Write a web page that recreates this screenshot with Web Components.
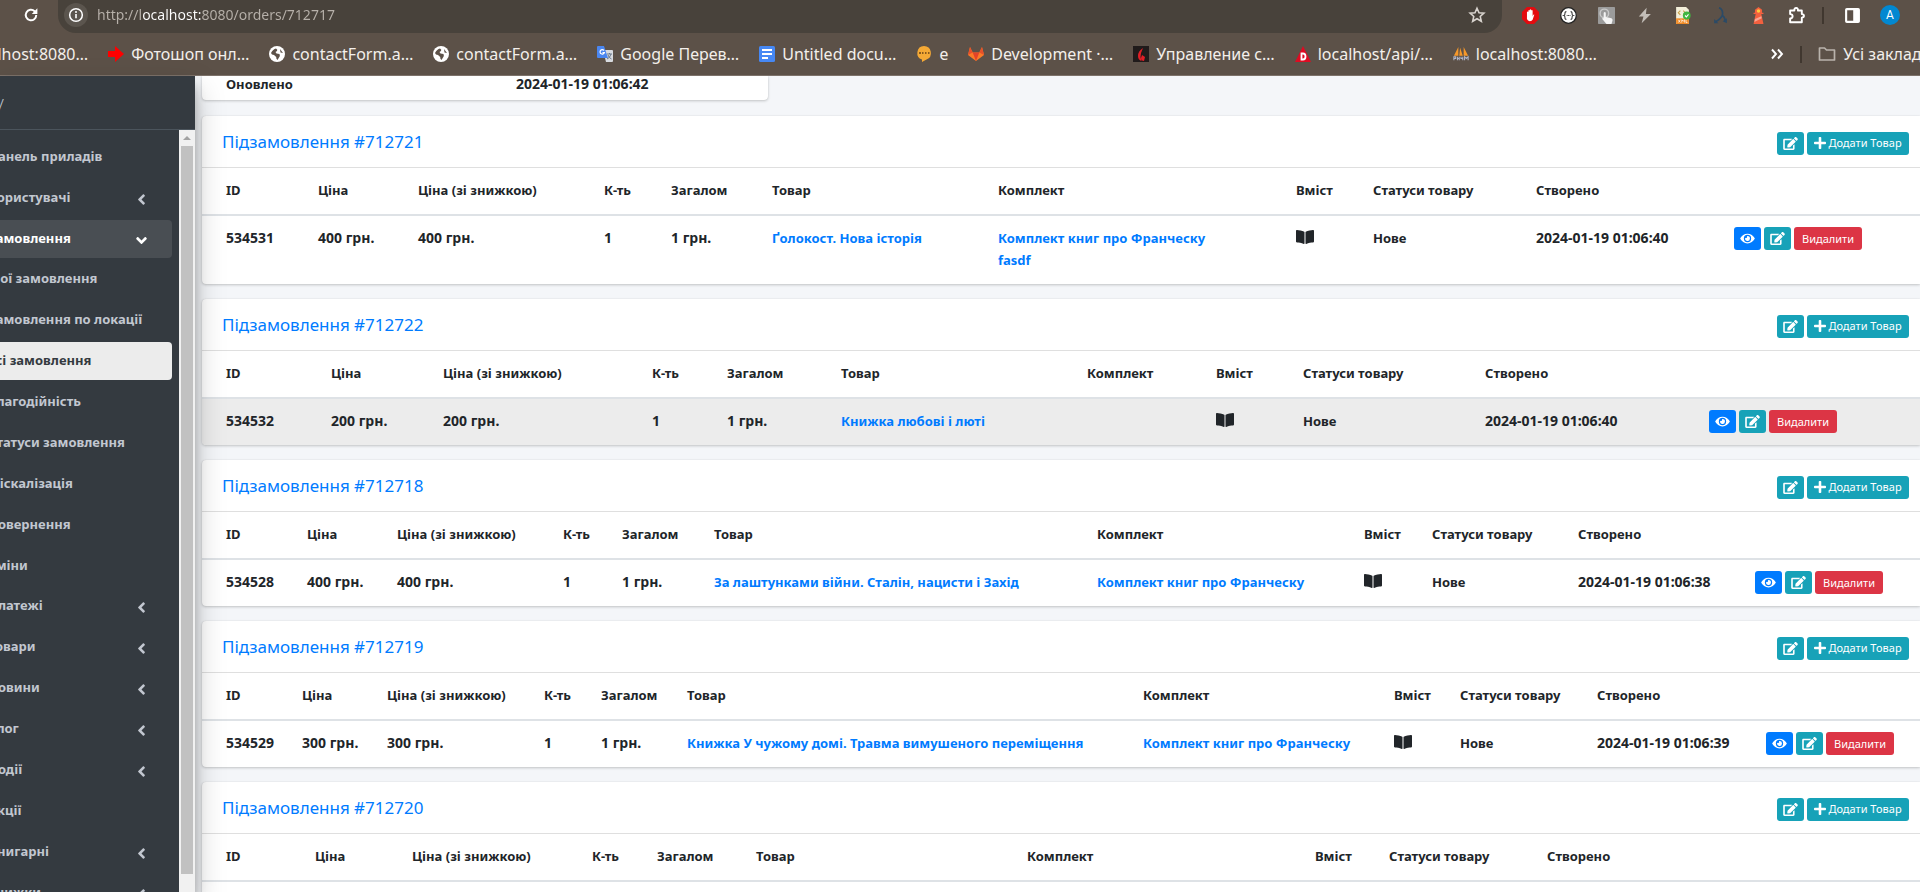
<!DOCTYPE html>
<html lang="uk">
<head>
<meta charset="utf-8">
<title>Замовлення #712717</title>
<style>
  body { margin: 0; height: 100vh; overflow: hidden; display: flex; flex-direction: column;
    font: 13px/22px "Noto Sans", "Open Sans", sans-serif; color: #212529; background: #f4f6f9; }
  .page { flex: 1; min-height: 0; display: flex; }
</style>
</head>
<body>
<browser-chrome></browser-chrome>
<div class="page">
  <side-bar></side-bar>
  <order-page></order-page>
</div>

<script>
const ICONS = {
  reload: ['0 0 24 24', '<path d="M19 12a7 7 0 1 1-2.2-5.1L19 9" fill="none" stroke="#fff" stroke-width="2.6"/><path d="M20.500 3v7.500H13z" fill="#fff"/>'],
  info: ['0 0 24 24', '<circle cx="12" cy="12" r="9.500" fill="none" stroke="#fff" stroke-width="2.300"/><path d="M12 10.500v6.500" stroke="#fff" stroke-width="2.400"/><circle cx="12" cy="7.500" r="1.500" fill="#fff"/>'],
  star: ['0 0 24 24', '<path d="M12 3l2.700 6 6.500.6-4.900 4.300 1.500 6.500L12 17l-5.800 3.400 1.500-6.500L2.800 9.600l6.500-.6z" fill="none" stroke="#d9d4cf" stroke-width="2.100"/>'],
  abp: ['0 0 24 24', '<path d="M7 0h10l7 7v10l-7 7H7l-7-7V7z" fill="#e30b0f"/><path d="M7 11V7q1-1.500 2 0V5q1-1.500 2 0V4q1-1.500 2 0v1q1-1.500 2 0v8l1-2q2-1 1 1l-2 6q-1 2-4 2t-4-3z" fill="#fff"/>'],
  json: ['0 0 24 24', '<circle cx="12" cy="12" r="11" fill="#fff" stroke="#222" stroke-width="1.800"/><path d="M9 6.500Q6.800 6.500 7 9q.3 2.500-1.500 3 1.800.5 1.500 3-.2 2.500 2 2.500M15 6.500q2.200 0 2 2.500-.3 2.500 1.500 3-1.800.5-1.500 3 .2 2.500-2 2.500" fill="none" stroke="#333" stroke-width="1.500"/><path d="M9.500 12h1.200M11.500 12h1.200M13.500 12h1.200" stroke="#333" stroke-width="1.500"/>'],
  tap: ['0 0 24 24', '<rect width="24" height="24" rx="1" fill="#9b9b9b"/><circle cx="9" cy="9" r="6" fill="none" stroke="#c9c9c9" stroke-width="2"/><path d="M8 8q1.500-2 3 0v6l8 2q2 1 1.500 3L19 24h-7l-6-7q0-2 2-1z" fill="#f4f4f4"/>'],
  bolt: ['0 0 24 24', '<path d="M15 1L4 13.500h6.500L8 23 21 10h-7z" fill="#c3beb8"/>'],
  xml: ['0 0 24 24', '<path d="M3 0h14l4 4v20H3z" fill="#f3efda"/><path d="M3 16h18v8H3z" fill="#f08a24"/><path d="M9 5L6 8l3 3M13 5l3 3-3 3" fill="none" stroke="#c9a24a" stroke-width="1.500"/><path d="M6 18l3 4m0-4l-3 4m5 0v-4l2 2 2-2v4m2-4v4h2" stroke="#fff" fill="none"/><circle cx="18" cy="12" r="5.500" fill="#41b53f"/><path d="M15.500 12l2 2 3-3.500" fill="none" stroke="#fff" stroke-width="1.500"/>'],
  branch: ['0 0 24 24', '<path d="M10 1q5 2 5 8 0 6-10 12M14 11q4 3 5 9" fill="none" stroke="#2b4a66" stroke-width="2.400"/><path d="M3 17v6h6zM15 20l6 3v-7z" fill="#2b4a66"/>'],
  lighthouse: ['0 0 24 24', '<path d="M12 0l5 4v4h2v2H5V8h2V4z" fill="#f2603f"/><path d="M8 10h8l3 14H5z" fill="#f2603f"/><circle cx="12" cy="5.500" r="2.500" fill="#ffc83d"/><path d="M7 17l9-4 .5 3L6.200 21z" fill="#f9a593"/>'],
  puzzle: ['0 0 24 24', '<path d="M3 5h6q-.5-3.500 2.500-3.500T14 5h5.500v5q3 0 3 2.500t-3 2.500v6.500H3v-5.500q3.500 0 3.500-3T3 10z" fill="none" stroke="#fff" stroke-width="2.700" stroke-linejoin="round"/>'],
  panel: ['0 0 24 24', '<rect x="3" y="3" width="18" height="18" rx="1" fill="none" stroke="#fff" stroke-width="3"/><path d="M13 3h8v18h-8z" fill="#fff"/>'],
  arrow: ['0 0 16 16', '<path d="M0 5h7V0l9 8-9 8v-5H0z" fill="#fd0000"/>'],
  globe: ['0 0 16 16', '<circle cx="8" cy="8" r="8" fill="#fff"/><path d="M2 7q2-4 5-4.500 2 1 1 2.500L6.500 6l1 1.500 3 .5q1 2-.5 3.500L8.500 14Q7 13 7.200 11L5 9 3 8.500M11 3l3 4-2.500-.5z" fill="#5c5148"/>'],
  translate: ['0 0 16 16', '<path d="M6 4h9q1 0 1 1v10q0 1-1 1H9z" fill="#d8dbe0"/><path d="M10 8h5M12.500 7v1M14 8q-1 4-4 5M11 9q1 3 3.500 4" stroke="#6b7a8c" fill="none"/><path d="M1 0h6l4 12H1q-1 0-1-1V1q0-1 1-1z" fill="#4a86f0"/><path d="M7 4.500a2.200 2.200 0 1 0 .4 2H5.500" fill="none" stroke="#fff" stroke-width="1.200"/>'],
  docs: ['0 0 16 16', '<rect width="16" height="16" rx="1.500" fill="#4688f4"/><path d="M3 4h10M3 8h10M3 12h6" stroke="#fff" stroke-width="1.800"/>'],
  chat: ['0 0 16 16', '<path d="M8 0a7 7 0 0 1 2.500 13.500L6 16v-2.400A7 7 0 0 1 8 0z" fill="#f5a935"/><path d="M3 7h2M6 7h1.500M9 7h1.500M12 7h1.500" stroke="#8a5a1c" stroke-width="2"/>'],
  gitlab: ['0 0 16 16', '<path d="M8 15L0 9l2-8 2.700 5.500h6.600L14 1l2 8z" fill="#fc7a27"/><path d="M8 15L4.700 6.500h6.600z" fill="#e24329"/><path d="M0 9l2-8 2.700 5.500zM16 9l-2-8-2.700 5.500z" fill="#e5502b"/>'],
  flame: ['0 0 16 16', '<path d="M0 0h16v16H0z" fill="#201b1b"/><path d="M10 2Q5 5 5 10q0 4 3.500 5L7.500 11q0-4 2.500-9zM9 9l3 2-1 4q-3 0-3-3z" fill="#e01f26"/>'],
  drupal: ['0 0 16 16', '<path d="M8 0l8 16H0z" fill="#dd0b22"/><path d="M6.500 7.500v6H8q2.500 0 2.500-3T8 7.500z" fill="none" stroke="#fff" stroke-width="1.800"/>'],
  sails: ['0 0 18 16', '<path d="M6 0v10H1zM8 1l3 9H7zM12 0l5 10h-5z" fill="#f6982a"/><path d="M1 15v-4h2v2H1m4-2v4m0-2h2m0-2v4m2-4v2h2v-2m0 4v-4m2 4v-4l2 2 2-2v4" fill="none" stroke="#aeb4c8" stroke-width="1.200"/>'],
  more: ['0 0 14 14', '<path d="M2 2.500L6 7l-4 4.500M8 2.500L12 7l-4 4.500" fill="none" stroke="#fff" stroke-width="1.900"/>'],
  folder: ['0 0 18 16', '<path d="M1.500 2h5l2 2h8v10h-15z" fill="none" stroke="#b9b3ac" stroke-width="1.700" stroke-linejoin="round"/>'],
  left: ['0 0 256 512', '<path fill="currentColor" d="M31.700 239l136-136c9.400-9.400 24.600-9.400 33.900 0l22.600 22.600c9.400 9.400 9.400 24.600 0 33.900L127.900 256l96.400 96.400c9.400 9.400 9.400 24.600 0 33.900L201.700 409c-9.400 9.400-24.600 9.400-33.900 0l-136-136c-9.500-9.400-9.500-24.600-.1-34z"/>'],
  down: ['0 0 512 512', '<path fill="currentColor" transform="rotate(-90 256 256) translate(128 0)" d="M31.700 239l136-136c9.400-9.400 24.600-9.400 33.900 0l22.600 22.600c9.400 9.400 9.400 24.600 0 33.900L127.900 256l96.400 96.400c9.400 9.400 9.400 24.600 0 33.900L201.700 409c-9.400 9.400-24.600 9.400-33.900 0l-136-136c-9.500-9.400-9.500-24.600-.1-34z"/>'],
  eye: ['0 0 576 512', '<path fill="currentColor" d="M572.520 241.400C518.290 135.590 410.930 64 288 64S57.680 135.640 3.480 241.410a32.350 32.350 0 0 0 0 29.190C57.710 376.410 165.070 448 288 448s230.320-71.640 284.520-177.410a32.350 32.350 0 0 0 0-29.190zM288 400a144 144 0 1 1 144-144 143.930 143.930 0 0 1-144 144zm0-240a95.310 95.310 0 0 0-25.310 3.790 47.850 47.850 0 0 1-66.900 66.900A95.780 95.780 0 1 0 288 160z"/>'],
  edit: ['0 0 576 512', '<path fill="currentColor" d="M402.600 83.200l90.200 90.200c3.800 3.800 3.800 10 0 13.800L274.400 405.600l-92.800 10.300c-12.400 1.400-22.900-9.100-21.500-21.500l10.300-92.800L388.800 83.200c3.800-3.800 10-3.800 13.800 0zm162-22.900l-48.800-48.800c-15.200-15.200-39.900-15.200-55.200 0l-35.400 35.400c-3.800 3.800-3.800 10 0 13.800l90.200 90.200c3.800 3.800 10 3.800 13.800 0l35.400-35.400c15.200-15.300 15.200-40 0-55.200zM384 346.200V448H64V128h229.800c3.200 0 6.200-1.300 8.500-3.500l40-40c7.600-7.600 2.200-20.500-8.500-20.500H48C21.500 64 0 85.500 0 112v352c0 26.500 21.500 48 48 48h352c26.500 0 48-21.500 48-48V306.200c0-10.700-12.900-16-20.500-8.500l-40 40c-2.200 2.300-3.500 5.300-3.500 8.500z"/>'],
  plus: ['0 0 448 512', '<path fill="currentColor" d="M416 208H272V64c0-17.670-14.330-32-32-32h-32c-17.670 0-32 14.330-32 32v144H32c-17.670 0-32 14.330-32 32v32c0 17.670 14.330 32 32 32h144v144c0 17.670 14.330 32 32 32h32c17.670 0 32-14.330 32-32V304h144c17.670 0 32-14.330 32-32v-32c0-17.670-14.330-32-32-32z"/>'],
  book: ['0 0 576 512', '<path fill="currentColor" d="M542.220 32.050c-54.800 3.110-163.720 14.430-230.960 55.590-4.640 2.840-7.270 7.890-7.270 13.170v363.870c0 11.550 12.630 18.850 23.280 13.490 69.180-34.820 169.230-44.320 218.700-46.920 16.890-.89 30.020-14.430 30.020-30.660V62.750c.01-17.710-15.350-31.740-33.770-30.700zM264.730 87.640C197.500 46.480 88.580 35.170 33.780 32.050 15.360 31.010 0 45.040 0 62.750V400.600c0 16.240 13.130 29.780 30.020 30.660 49.490 2.600 149.590 12.110 218.770 46.950 10.620 5.350 23.210-1.940 23.210-13.460V100.630c0-5.290-2.620-10.140-7.270-12.990z"/>']
};

customElements.define('ui-icon', class extends HTMLElement {
  connectedCallback() {
    const [box, art] = ICONS[this.getAttribute('name')];
    this.attachShadow({ mode: 'open' }).innerHTML =
      `<style>:host{display:inline-flex;flex:none;width:var(--w,16px);height:var(--h,16px)}svg{width:100%;height:100%;display:block}</style>
       <svg viewBox="${box}" aria-hidden="true">${art}</svg>`;
  }
});

customElements.define('bookmark-link', class extends HTMLElement {
  connectedCallback() {
    this.attachShadow({ mode: 'open' }).innerHTML =
      `<style>:host{display:block;flex:none}
        a{display:flex;align-items:center;gap:7px;color:#f3efeb;text-decoration:none;white-space:nowrap;font-size:16px;line-height:24px}
       </style><a href="#">${this.hasAttribute('icon') ? `<ui-icon name="${this.getAttribute('icon')}"></ui-icon>` : ''}<span><slot></slot></span></a>`;
  }
});

customElements.define('browser-chrome', class extends HTMLElement {
  connectedCallback() {
    const tools = ['abp', 'json', 'tap', 'bolt', 'xml', 'branch', 'lighthouse', 'puzzle'];
    const marks = [['arrow', 'Фотошоп онл…'], ['globe', 'contactForm.a…'], ['globe', 'contactForm.a…'], ['translate', 'Google Перев…'],
      ['docs', 'Untitled docu…'], ['chat', 'е'], ['gitlab', 'Development ·…'], ['flame', 'Управление с…'], ['drupal', 'localhost/api/…'], ['sails', 'localhost:8080…']];
    this.attachShadow({ mode: 'open' }).innerHTML = `<style>
      :host{display:block;flex:none;background:#5c5148;border-bottom:1px solid #7d726a;overflow:hidden}
      button{border:0;background:none;padding:0;margin:0;display:flex;align-items:center;justify-content:center;font:inherit;color:#fff}
      .top{display:flex;align-items:center;height:33px}
      .reload{width:58px;height:30px;padding-left:4px;--w:18px;--h:18px;margin-bottom:3px}
      .omni{flex:1;display:flex;align-items:center;height:33px;background:#48423b;border-radius:0 0 18px 18px;padding:0 12px 3px 6px;box-sizing:border-box}
      .omni .info{width:24px;height:24px;border-radius:12px;background:#5b554e;--w:16px;--h:16px}
      .omni .star{width:26px;--w:18px;--h:18px}
      input{flex:1;min-width:0;border:0;outline:0;padding:0 0 0 9px;height:24px;font:14px/24px "Noto Sans",sans-serif;color:transparent;
        background:linear-gradient(90deg,#b7b1aa 53px,#fff 53px,#fff 114px,#b7b1aa 114px) text;-webkit-background-clip:text;background-clip:text}
      .tools{display:flex;align-items:center;margin:0 11px 3px 9px;height:30px}
      .tools button{width:38px;--w:17px;--h:17px}
      .sep{width:2px;height:17px;background:#40372f;margin:0 9px 0 7px}
      .avatar b{width:20px;height:20px;border-radius:10px;background:#0288d1;font:12px/20px Roboto,sans-serif}
      .marks{display:flex;align-items:center;gap:20px;height:42px}
      .marks .first{margin-left:-33px}
      .grow{flex:1}
      .more{--w:14px;--h:14px}
      .marks .sep{margin:0 -4px}
      .all{margin-right:-20px;--w:18px}
    </style>
    <div class="top">
      <button class="reload" aria-label="Оновити"><ui-icon name="reload"></ui-icon></button>
      <div class="omni"><button class="info" aria-label="Про сайт"><ui-icon name="info"></ui-icon></button>
        <input aria-label="Адреса" value="http://localhost:8080/orders/712717">
        <button class="star" aria-label="Закладка"><ui-icon name="star"></ui-icon></button></div>
      <div class="tools">${tools.map(t => `<button aria-label="${t}"><ui-icon name="${t}"></ui-icon></button>`).join('')}
        <span class="sep"></span><button aria-label="panel"><ui-icon name="panel"></ui-icon></button>
        <button class="avatar"><b>A</b></button></div>
    </div>
    <div class="marks"><bookmark-link class="first">localhost:8080…</bookmark-link>
      ${marks.map(([i, t]) => `<bookmark-link icon="${i}">${t}</bookmark-link>`).join('')}
      <span class="grow"></span><button class="more" aria-label="Більше закладок"><ui-icon name="more"></ui-icon></button><span class="sep"></span>
      <bookmark-link class="all" icon="folder">Усі закладки</bookmark-link></div>`;
  }
});

customElements.define('nav-item', class extends HTMLElement {
  connectedCallback() {
    const arrow = this.getAttribute('arrow');
    this.attachShadow({ mode: 'open' }).innerHTML = `<style>
      :host{display:block}
      a{display:flex;align-items:center;justify-content:space-between;height:38px;padding:0 22px 2px 12px;box-sizing:border-box;border-radius:4px;
        color:#c2c7d0;font-weight:700;text-decoration:none;white-space:nowrap;--w:17px;--h:17px}
      ui-icon{margin-top:5px}
      :host([open]) a{background:#494e53;color:#fff}
      :host([current]) a{background:#ececec;color:#343a40}
    </style><a href="#"><span><slot></slot></span>${arrow ? `<ui-icon name="${arrow}"></ui-icon>` : ''}</a>`;
  }
});

customElements.define('side-bar', class extends HTMLElement {
  connectedCallback() {
    const item = ([t, a = '', f = '']) => `<nav-item ${a ? `arrow="${a}"` : ''} ${f}>${t}</nav-item>`;
    const head = [['Панель приладів'], ['Користувачі', 'left'], ['Замовлення', 'down', 'open']];
    const sub = [['Мої замовлення'], ['Замовлення по локації'], ['Усі замовлення', '', 'current'], ['Благодійність'], ['Статуси замовлення'], ['Фіскалізація'], ['Повернення'], ['Зміни']];
    const tail = [['Платежі', 'left'], ['Товари', 'left'], ['Новини', 'left'], ['Блог', 'left'], ['Події', 'left'], ['Акції'], ['Книгарні', 'left'], ['Знижки', 'left']];
    this.attachShadow({ mode: 'open' }).innerHTML = `<style>
      :host{display:flex;flex-direction:column;flex:none;width:195px;background:#343a40;position:relative;z-index:1;
        box-shadow:0 14px 28px rgba(0,0,0,.25),0 10px 10px rgba(0,0,0,.22)}
      .brand{height:54px;box-sizing:border-box;border-bottom:1px solid #4b545c;color:#c2c7d0;text-decoration:none;font-size:17px;line-height:58px;font-weight:300;margin-left:-2px}
      .body{flex:1;min-height:0;display:flex}
      nav{flex:1;min-width:0;overflow:hidden;padding:8px 7px 0 0}
      .list{display:flex;flex-direction:column;gap:3px;margin-left:-24px}
      .sub{display:flex;flex-direction:column;gap:3px;margin:-1px 0}
      .bar{width:16px;background:#f1f1f1;display:flex;flex-direction:column;align-items:center}
      .bar i{border:4px solid transparent;border-top:0;border-bottom:4px solid #a3a3a3;margin:6px 0}
      .bar b{width:12px;flex:1;background:#c1c1c1;margin-bottom:18px}
    </style>
    <a class="brand" href="#">/</a>
    <div class="body"><nav><div class="list">${head.map(item).join('')}<div class="sub">${sub.map(item).join('')}</div>${tail.map(item).join('')}</div></nav>
    <div class="bar"><i></i><b></b></div></div>`;
  }
});

const BUTTONS = `
  button{display:inline-flex;align-items:center;justify-content:center;gap:2px;height:23px;border:0;border-radius:3px;padding:0;width:27px;
    background:#17a2b8;color:#fff;font:11px/22px "Noto Sans",sans-serif;--w:15px;--h:13px}
  .view{background:#007bff}
  .del{background:#dc3545;width:68px}
  .add{width:102px;--w:12px;--h:14px}`;

customElements.define('order-card', class extends HTMLElement {
  connectedCallback() {
    const { number, cols, row, hover } = this.data;
    const heads = ['ID', 'Ціна', 'Ціна (зі знижкою)', 'К-ть', 'Загалом', 'Товар', 'Комплект', 'Вміст', 'Статуси товару', 'Створено', ''];
    const [id, price, book, kit, date] = row;
    const cells = [id, price, price, '1', '1 грн.', `<a href="#">${book}</a>`, kit ? `<a href="#">${kit}</a>` : '',
      '<ui-icon name="book"></ui-icon>', 'Нове', date];
    const num = [0, 1, 2, 3, 4, 9];
    this.attachShadow({ mode: 'open' }).innerHTML = `<style>
      :host{display:block;background:#fff;border-radius:4px 0 0 4px;box-shadow:0 0 1px rgba(0,0,0,.13),0 1px 3px rgba(0,0,0,.2);overflow:hidden;flex:none}
      header{display:flex;align-items:center;height:52px;box-sizing:border-box;border-bottom:1px solid #dfdfdf;padding:3px 11px 0 20px}
      h3{margin:0;flex:1;font-size:17px;line-height:22px;font-weight:400;padding-bottom:2px}
      a{color:#007bff;text-decoration:none}
      .tools{display:flex;gap:3px}
      table{width:100%;table-layout:fixed;border-collapse:separate;border-spacing:0}
      th,td{padding:11px 0 13px 12px;text-align:left;vertical-align:top;font-weight:700;white-space:nowrap}
      th{border-bottom:2px solid #dee2e6}
      th:first-child,td:first-child{padding-left:24px}
      .num{font-size:14px}
      td:last-child{padding:11px 0 0 12px}
      td>ui-icon{--w:18px;--h:16px;margin-top:2px;vertical-align:top}
      .acts{display:flex;gap:3px}
      .hover{background:#ececec}
      ${BUTTONS}
    </style>
    <header><h3><a href="#">Підзамовлення #${number}</a></h3>
      <div class="tools"><button aria-label="Редагувати"><ui-icon name="edit"></ui-icon></button><button class="add"><ui-icon name="plus"></ui-icon>Додати Товар</button></div></header>
    <table><colgroup>${cols.map((x, i) => `<col style="width:${i ? x - cols[i - 1] : x - 214}px">`).join('')}<col></colgroup>
      <thead><tr>${heads.map(h => `<th>${h}</th>`).join('')}</tr></thead>
      <tbody><tr class="${hover ? 'hover' : ''}">${cells.map((c, i) => `<td class="${num.includes(i) ? 'num' : ''}">${c}</td>`).join('')}
        <td><div class="acts"><button class="view" aria-label="Переглянути"><ui-icon name="eye"></ui-icon></button><button aria-label="Редагувати"><ui-icon name="edit"></ui-icon></button><button class="del">Видалити</button></div></td></tr></tbody>
    </table>`;
  }
});

const ORDERS = [
  { number: 712721, cols: [318, 418, 604, 671, 772, 998, 1296, 1373, 1536, 1734], row: ['534531', '400 грн.', 'Ґолокост. Нова історія', 'Комплект книг про Франческу<br>fasdf', '2024-01-19 01:06:40'] },
  { number: 712722, hover: true, cols: [331, 443, 652, 727, 841, 1087, 1216, 1303, 1485, 1709], row: ['534532', '200 грн.', 'Книжка любові і люті', '', '2024-01-19 01:06:40'] },
  { number: 712718, cols: [307, 397, 563, 622, 714, 1097, 1364, 1432, 1578, 1755], row: ['534528', '400 грн.', 'За лаштунками війни. Сталін, нацисти і Захід', 'Комплект книг про Франческу', '2024-01-19 01:06:38'] },
  { number: 712719, cols: [302, 387, 544, 601, 687, 1143, 1394, 1460, 1597, 1766], row: ['534529', '300 грн.', 'Книжка У чужому домі. Травма вимушеного переміщення', 'Комплект книг про Франческу', '2024-01-19 01:06:39'] },
  { number: 712720, cols: [315, 412, 592, 657, 756, 1027, 1315, 1389, 1547, 1740], row: ['534530', '300 грн.', 'Книжка', '', '2024-01-19 01:06:40'] }
];

customElements.define('order-page', class extends HTMLElement {
  connectedCallback() {
    const root = this.attachShadow({ mode: 'open' });
    root.innerHTML = `<style>
      :host{flex:1;min-width:0;display:flex;flex-direction:column;gap:15px;padding-left:7px;overflow:hidden}
      .info{width:566px;flex:none;margin-bottom:1px;background:#fff;border-radius:0 0 4px 4px;box-shadow:0 0 1px rgba(0,0,0,.13),0 1px 3px rgba(0,0,0,.2)}
      table{width:100%;table-layout:fixed;border-spacing:0}
      th,td{padding:0 0 8px 24px;line-height:16px;text-align:left;font-weight:700;width:290px;box-sizing:border-box}
      td{font-size:14px;width:auto}
    </style><div class="info"><table><tr><th>Оновлено</th><td>2024-01-19 01:06:42</td></tr></table></div>`;
    for (const data of ORDERS) {
      const card = document.createElement('order-card');
      card.data = data;
      root.append(card);
    }
  }
});
</script>
</body>
</html>
